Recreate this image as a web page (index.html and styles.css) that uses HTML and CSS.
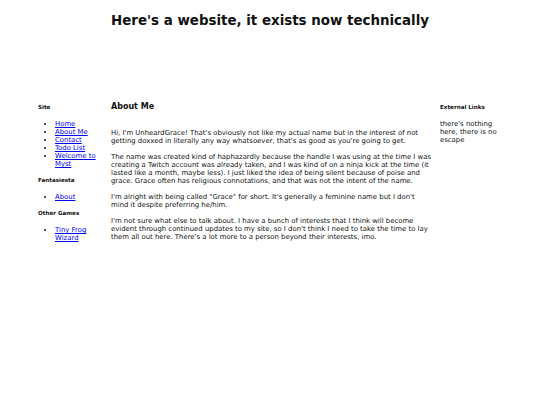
FILE: index.html
```html
<!DOCTYPE html>
<html>
<head>
<meta charset="utf-8">
<link rel="stylesheet" href="styles.css">
</head>
<body>
<header class="top">
  <h1 class="title">Here's a website, it exists now technically</h1>
</header>
<div class="layout">
  <nav class="side">
    <h4 class="side-head">Site</h4>
    <ul class="links">
      <li><a href="#">Home</a></li>
      <li><a href="#">About Me</a></li>
      <li><a href="#">Contact</a></li>
      <li><a href="#">Todo List</a></li>
      <li><a href="#">Welcome to Myst</a></li>
    </ul>
    <h4 class="side-head">Fantasiesta</h4>
    <ul class="links">
      <li><a href="#">About</a></li>
    </ul>
    <h4 class="side-head">Other Games</h4>
    <ul class="links">
      <li><a href="#">Tiny Frog Wizard</a></li>
    </ul>
  </nav>
  <main class="main">
    <h3 class="main-head">About Me</h3>
    <p>Hi, I'm UnheardGrace! That's obviously not like my actual name but in the interest of not getting doxxed in literally any way whatsoever, that's as good as you're going to get.</p>
    <p>The name was created kind of haphazardly because the handle I was using at the time I was creating a Twitch account was already taken, and I was kind of on a ninja kick at the time (it lasted like a month, maybe less). I just liked the idea of being silent because of poise and grace. Grace often has religious connotations, and that was not the intent of the name.</p>
    <p>I'm alright with being called "Grace" for short. It's generally a feminine name but I don't mind it despite preferring he/him.</p>
    <p>I'm not sure what else to talk about. I have a bunch of interests that I think will become evident through continued updates to my site, so I don't think I need to take the time to lay them all out here. There's a lot more to a person beyond their interests, imo.</p>
  </main>
  <aside class="side">
    <h4 class="side-head">External Links</h4>
    <p>there's nothing here, there is no escape</p>
  </aside>
</div>
</body>
</html>
```
FILE: styles.css
```css
html, body {
  margin: 0;
  padding: 0;
  background: #fff;
}
body {
  font-family: "DejaVu Sans", Verdana, sans-serif;
  font-size: 6.9px;
  line-height: 8px;
  color: #111;
}
.top {
  height: 94px;
  padding-top: 12px;
  box-sizing: border-box;
}
.title {
  margin: 0;
  text-align: center;
  font-size: 13.4px;
  line-height: 18px;
  font-weight: bold;
}
.layout {
  width: 464px;
  margin: 0 auto;
  display: grid;
  grid-template-columns: 73px 329px 62px;
}
.main {
  padding-right: 6px;
}
.side-head {
  font-size: 5.6px;
  font-weight: bold;
  margin: 8px 0 9px;
  line-height: 8px;
}
.side-head:first-child {
  margin-top: 9px;
}
.main-head {
  font-size: 8px;
  line-height: 10px;
  font-weight: bold;
  margin: 8px 0 17px;
}
.links {
  margin: 9px 0 8px;
  padding-left: 17px;
  list-style: disc;
}
.links a {
  color: #0000ee;
}
p {
  margin: 8px 0;
}
.side p {
  margin-top: 9px;
}
```
